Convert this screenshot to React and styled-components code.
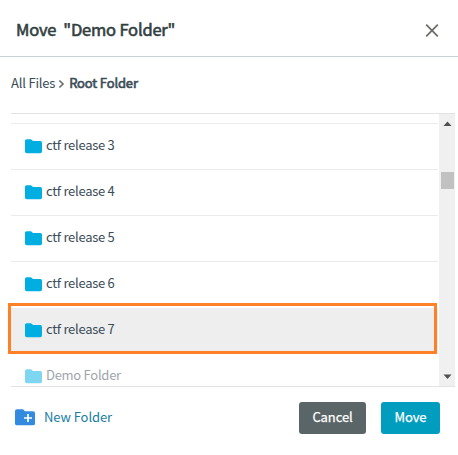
import React from "react";
import styled, { createGlobalStyle } from "styled-components";

const GlobalStyle = createGlobalStyle`
  * { box-sizing: border-box; }
  body { margin: 0; background: #fff; overflow: hidden; }
`;

const Dialog = styled.div`
  width: 458px;
  height: 455px;
  display: flex;
  flex-direction: column;
  background: #fff;
  color: #3a4c58;
  font-family: "Noto Sans CJK SC", "Noto Sans", sans-serif;
  font-size: 13px;
  line-height: 20px;
`;

const Header = styled.header`
  height: 57px;
  flex: none;
  display: flex;
  align-items: center;
  justify-content: space-between;
  padding: 5px 19px 0 16px;
  border-bottom: 1px solid #c5d2d6;
`;

const Title = styled.h1`
  margin: -3px 0 0;
  font-size: 16.5px;
  line-height: 24px;
  font-weight: 400;
  letter-spacing: -0.19px;
  color: #333f3f;
  white-space: pre;
  -webkit-text-stroke: 0.6px #333f3f;
`;

const CloseButton = styled.button`
  display: flex;
  padding: 0;
  border: 0;
  background: none;
`;

const Breadcrumb = styled.nav`
  height: 56px;
  flex: none;
  display: flex;
  align-items: center;
  padding: 0 11px 4px;
`;

const Crumb = styled.span`
  letter-spacing: ${(p) => (p.$current ? "-0.15px" : "-0.2px")};
  -webkit-text-stroke: ${(p) => (p.$current ? "0.6px" : "0")} #3a4c54;
`;

const Chevron = styled.svg`
  margin: 1px 4px 0 3px;
`;

const ListFrame = styled.div`
  height: 274px;
  width: 444px;
  flex: none;
  margin-left: 11px;
  display: flex;
  justify-content: space-between;
  border-top: 1px solid #e1e3e4;
  border-bottom: 1px solid #e1e3e4;
`;

const Rows = styled.ul`
  width: 427px;
  height: 272px;
  margin: 0;
  padding: 9px 0 0;
  list-style: none;
`;

const Row = styled.li`
  position: relative;
  height: ${(p) => (p.$last ? 33 : 46)}px;
  overflow: ${(p) => (p.$last ? "hidden" : "visible")};
  display: flex;
  align-items: flex-start;
  gap: 4px;
  padding: 11px 0 0 14px;
  border-top: 1px solid ${(p) => (p.$last || p.$selected ? "transparent" : "#ebebeb")};
  background: ${(p) => (p.$selected ? "#eeeeee" : "transparent")};
  background-clip: padding-box;
  opacity: ${(p) => (p.$last ? 0.5 : 1)};
  letter-spacing: -0.27px;

  & > svg { flex: none; margin-top: 4px; }
`;

const Highlight = styled.div`
  position: absolute;
  top: -5px;
  left: -3px;
  height: 51px;
  width: 429px;
  border: 3px solid #ff8026;
`;

const Scrollbar = styled.div`
  width: 16px;
  height: 272px;
  display: flex;
  flex-direction: column;
  align-items: center;
  background: #f0f0f0;
`;

const Arrow = styled.svg`
  flex: none;
  margin-top: ${(p) => (p.$down ? "auto" : "0")};
`;

const Thumb = styled.div`
  width: 13px;
  height: 17px;
  margin-top: 42px;
  margin-left: 1px;
  background: #c1c1c1;
`;

const Footer = styled.footer`
  display: flex;
  align-items: center;
  height: 62px;
  padding: 0 18px 0 15px;
`;

const NewFolder = styled.button`
  display: flex;
  align-items: center;
  gap: 9px;
  padding: 0 0 2px;
  margin-right: auto;
  border: 0;
  background: none;
  color: #187da3;
  font: inherit;
  letter-spacing: -0.08px;
`;

const Button = styled.button`
  width: ${(p) => p.$width}px;
  height: 32px;
  margin-left: ${(p) => (p.$primary ? 15 : 0)}px;
  padding: 0 0 2px;
  border: 0;
  border-radius: 3px;
  background: ${(p) => (p.$primary ? "#009dbf" : "#596566")};
  color: #fff;
  font: inherit;
  letter-spacing: -0.1px;
  -webkit-text-stroke: 0.25px #fff;
`;

const FolderIcon = () => (
  <svg width="17" height="15" viewBox="0 0 17 15">
    <path d="M1.7 0.2H6L8 2.1H15.3Q17 2.1 17 3.7V12.6Q17 14.2 15.3 14.2H1.7Q0 14.2 0 12.6V1.8Q0 .2 1.7 .2Z" fill="#00aee2" />
  </svg>
);

const folders = ["ctf release 3", "ctf release 4", "ctf release 5", "ctf release 6", "ctf release 7", "Demo Folder"];

export default function App() {
  return (
    <Dialog>
      <GlobalStyle />
      <Header>
        <Title>{'Move  "Demo Folder"'}</Title>
        <CloseButton aria-label="Close">
          <svg width="14" height="14" viewBox="0 0 14 14">
            <path d="M1.2 0.7L12.8 12.3M12.8 0.7L1.2 12.3" stroke="#6b6d68" strokeWidth="1.7" />
          </svg>
        </CloseButton>
      </Header>
      <Breadcrumb>
        <Crumb>All Files</Crumb>
        <Chevron width="7" height="10" viewBox="0 0 7 10">
          <path d="M1.4 1.5L5 5L1.4 8.5" fill="none" stroke="#6b6f6e" strokeWidth="1.7" />
        </Chevron>
        <Crumb $current>Root Folder</Crumb>
      </Breadcrumb>
      <ListFrame>
        <Rows>
          {folders.map((name, i) => (
            <Row key={name} $selected={i === 4} $last={i === 5}>
              <FolderIcon />
              <span>{name}</span>
              {i === 4 && <Highlight />}
            </Row>
          ))}
        </Rows>
        <Scrollbar>
          <Arrow width="16" height="16" viewBox="0 0 16 16">
            <path d="M4.5 12L8.5 7.5L12.5 12Z" fill="#505050" />
          </Arrow>
          <Thumb />
          <Arrow $down width="16" height="16" viewBox="0 0 16 16">
            <path d="M4.5 4.5L8.5 9L12.5 4.5Z" fill="#505050" />
          </Arrow>
        </Scrollbar>
      </ListFrame>
      <Footer>
        <NewFolder>
          <svg width="20" height="17" viewBox="0 0 20 17">
            <path d="M2 0.3H8L10 2.2H18Q20 2.2 20 4V14.4Q20 16.3 18 16.3H2Q0 16.3 0 14.4V2Q0 .3 2 .3Z" fill="#338be0" />
            <path d="M13 5V13M9 9H17" stroke="#fff" strokeWidth="1.7" />
          </svg>
          <span>New Folder</span>
        </NewFolder>
        <Button $width={67}>Cancel</Button>
        <Button $width={59} $primary>Move</Button>
      </Footer>
    </Dialog>
  );
}
